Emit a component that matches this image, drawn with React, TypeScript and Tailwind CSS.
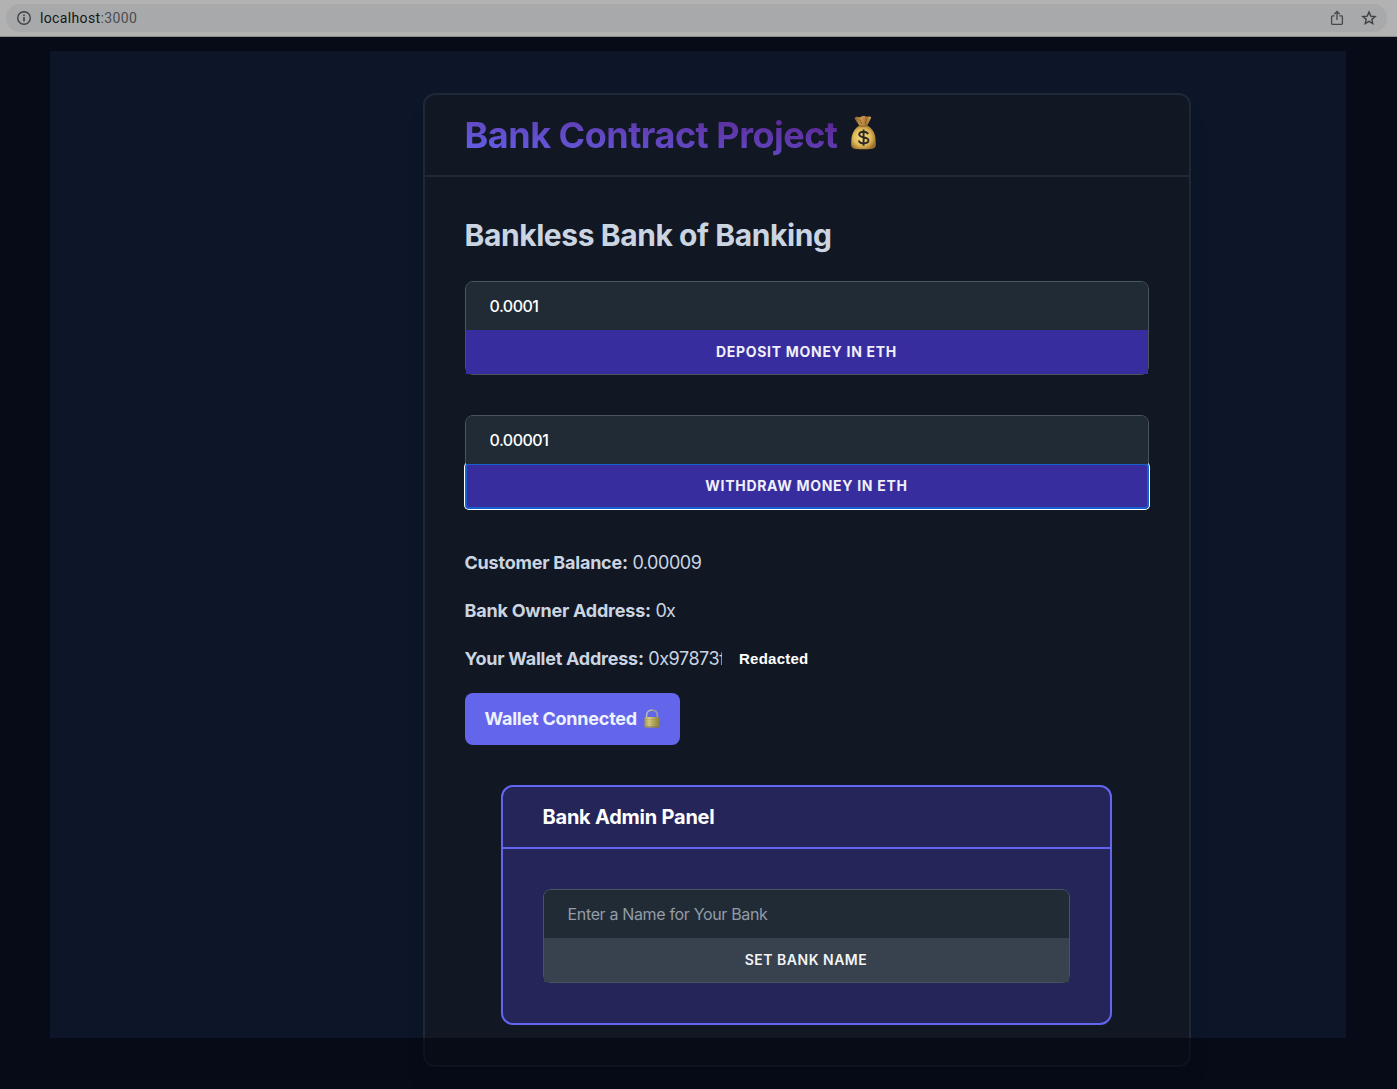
import React from "react";

function InfoIcon() {
  return (
    <svg width="16" height="16" viewBox="0 0 16 16" fill="none" className="shrink-0">
      <circle cx="8" cy="8" r="6.3" stroke="#3f4143" strokeWidth="1.4" />
      <rect x="7.2" y="7.2" width="1.6" height="4.2" fill="#3f4143" />
      <rect x="7.2" y="4.6" width="1.6" height="1.6" fill="#3f4143" />
    </svg>
  );
}

function ShareIcon() {
  return (
    <svg width="14" height="16" viewBox="0 0 14 16" fill="none" stroke="#46484a" strokeWidth="1.3">
      <path d="M4.6 5.9H2.4a.8.8 0 0 0-.8.8v6.9c0 .5.3.8.8.8h9.2c.5 0 .8-.3.8-.8V6.7a.8.8 0 0 0-.8-.8H9.4" />
      <path d="M7 10V2M4.3 4.2 7 1.5l2.7 2.7" />
    </svg>
  );
}

function StarIcon() {
  return (
    <svg width="16" height="16" viewBox="0 0 16 16" fill="none" stroke="#3f4143" strokeWidth="1.4">
      <path d="m8 2.1 1.75 4 4.35.4-3.3 2.85 1 4.25L8 11.35 4.2 13.6l1-4.25L1.9 6.5l4.35-.4z" />
    </svg>
  );
}

function MoneyBag() {
  return (
    <svg width="27" height="35" viewBox="0 0 27 35" className="relative -top-[3px] shrink-0">
      <defs>
        <linearGradient id="neck" x1="0" x2="1" y1="0" y2="0">
          <stop offset="0" stopColor="#8b5f25" />
          <stop offset=".4" stopColor="#c99a51" />
          <stop offset=".7" stopColor="#a87431" />
          <stop offset="1" stopColor="#d0a760" />
        </linearGradient>
        <radialGradient id="bag" cx=".45" cy=".5" r=".58">
          <stop offset="0" stopColor="#f5de87" />
          <stop offset=".6" stopColor="#dfbb58" />
          <stop offset="1" stopColor="#9a6b28" />
        </radialGradient>
      </defs>
      <path d="M5.5 2.2c1.8-.9 3.3.3 4.6 0 1.7-.5 2.9-1.9 4.7-1.2 1.5.5 2.8.9 4.6.5 1.3-.2 2.1.6 1.6 1.5L17 11H9.5L5 4.2c-.5-.8-.4-1.6.5-2z" fill="url(#neck)" />
      <path d="M9.5 10.500h7.700c4.100 2 6.900 5.700 7.900 10.200.7 3 .5 6.100.8 8.200.2 2.800-1.400 4.600-4.600 5-4.900.6-10.700.6-15.700.1-3.200-.4-4.600-2.100-4.500-4.700.2-3 .1-6.200 1-9 1.200-4.300 3.700-8 7.400-9.800z" fill="url(#bag)" />
      <path d="M9.200 10.700c2.600.8 5.600.8 8.100-.1M9.700 4.300l2.300 5M16.700 3.500l-1.600 5.600" stroke="#85591f" strokeWidth=".9" fill="none" />
      <path d="M18.100 19.100c-.7-1.700-2.300-2.400-4.500-2.400-2.700 0-4.400 1.100-4.400 2.900 0 4 9.300 1.700 9.300 5.700 0 1.900-1.900 3.100-4.800 3.100-2.600 0-4.400-.9-4.900-2.900M13.600 14.400v16.300" stroke="#302a27" strokeWidth="1.900" fill="none" />
    </svg>
  );
}

function Lock() {
  return (
    <svg width="16" height="19" viewBox="0 0 16 19" className="relative -top-px shrink-0">
      <defs>
        <linearGradient id="brass" x1="0" x2="1" y1="0" y2="0">
          <stop offset="0" stopColor="#a99a50" />
          <stop offset=".3" stopColor="#d9ce87" />
          <stop offset=".62" stopColor="#b3a65f" />
          <stop offset="1" stopColor="#8e8040" />
        </linearGradient>
      </defs>
      <path d="M2.700 9V6.400C2.700 3 4.800 1.200 8 1.200s5.300 1.800 5.300 5.200V9" fill="none" stroke="#979ca2" strokeWidth="1.700" />
      <path d="M2.500 8.500V6.300C2.500 3 4.700 1 8 1" fill="none" stroke="#c6cbc9" strokeWidth=".8" />
      <rect x=".5" y="8" width="15" height="10.400" rx="1" fill="url(#brass)" />
      <path d="M.7 10.700h14.600M.7 13.200h14.600M.7 15.700h14.600" stroke="#817638" strokeWidth=".4" opacity=".6" />
      <path d="M1 17.900h14" stroke="#77703d" strokeWidth=".8" />
    </svg>
  );
}

function FieldGroup({ value, placeholder, label, variant, focused }: {
  value?: string;
  placeholder?: string;
  label: string;
  variant: "indigo" | "gray";
  focused?: boolean;
}) {
  return (
    <div className="flex h-[94px] flex-col rounded-lg border border-[#4a545f]">
      <input
        type="text"
        defaultValue={value}
        placeholder={placeholder}
        className="relative z-10 h-12 w-full rounded-t-[7px] bg-[#212b36] px-[23.5px] text-base font-medium tracking-[-0.5px] text-white outline-none placeholder:font-normal placeholder:tracking-[-0.34px] placeholder:text-[#939ca8]"
      />
      <button
        className={
          "h-11 w-full pr-px text-sm " +
          (variant === "indigo" ? "bg-[#382d9e] font-bold tracking-[0.7px] text-[#f0f0fa] " : "bg-[#38414e] font-semibold tracking-[0.5px] text-[#f3f4f6] ") +
          (focused ? "rounded-[3px] shadow-[inset_0_0_0_1px_#1460cf,0_0_0_1px_#1460cf,0_0_0_2px_#ffffff]" : "")
        }
      >
        {label}
      </button>
    </div>
  );
}

export default function App() {
  return (
    <div className="relative flex h-[1089px] w-[1397px] flex-col overflow-hidden bg-[#0d1628] font-['Inter',sans-serif]">
      <header className="relative z-20 flex h-[37px] shrink-0 items-start border-b border-[#8d8d8d] bg-[#b2b2b2] px-1.5 pt-1">
        <div className="flex h-7 w-[1381px] items-center rounded-full bg-[#a8a9aa] pl-2.5 pr-2.5">
          <InfoIcon />
          <span className="ml-2 flex-1 font-[Roboto] text-sm tracking-[0.36px] text-[#151618]">
            localhost<span className="text-[#4b4d50]">:3000</span>
          </span>
          <div className="flex items-center gap-[17px]">
            <ShareIcon />
            <StarIcon />
          </div>
        </div>
      </header>

      <main className="ml-[423px] mt-14 flex h-[974px] w-[768px] flex-col rounded-xl border-2 border-[#1e2837] bg-[#111824] shadow-xl">
        <div className="flex h-[82px] items-center border-b-2 border-[#1e2837] px-[39.5px]">
          <h1 className="flex items-center gap-[12.5px] whitespace-nowrap text-4xl font-bold tracking-[-0.5px]">
            <span className="bg-gradient-to-tr from-[#6366f1] to-[#581c87] bg-clip-text leading-[48px] text-transparent">
              Bank Contract Project
            </span>
            <MoneyBag />
          </h1>
        </div>

        <section className="flex flex-col px-10 pt-10 text-[#cbd5e1]">
          <h2 className="-ml-[0.5px] h-9 whitespace-nowrap text-3xl font-bold tracking-[-0.42px]">Bankless Bank of Banking</h2>
          <div className="mt-7 flex flex-col gap-10">
            <FieldGroup value="0.0001" label="DEPOSIT MONEY IN ETH" variant="indigo" />
            <FieldGroup value="0.00001" label="WITHDRAW MONEY IN ETH" variant="indigo" focused />
          </div>
          <div className="-ml-[0.5px] mt-10 flex flex-col gap-5 whitespace-nowrap text-lg tracking-[-0.45px]">
            <p><b className="tracking-[-0.22px]">Customer Balance:</b> 0.00009</p>
            <p><b className="tracking-[-0.22px]">Bank Owner Address:</b> <span className="tracking-[-0.8px]">0x</span></p>
            <p className="flex h-7">
              <span className="w-[257.5px] overflow-hidden"><b className="tracking-[-0.24px]">Your Wallet Address:</b> 0x97873f</span>
              <span className="ml-[17px] pt-0.5 font-['Liberation_Sans'] text-[15px] font-bold tracking-[0.25px] text-white">Redacted</span>
            </p>
          </div>
          <button className="mt-5 flex h-[52px] w-[215px] items-center gap-[7.5px] whitespace-nowrap rounded-lg bg-[#6366eb] pl-[19.5px] text-lg font-bold tracking-[-0.22px] text-[#eef2ff]">
            Wallet Connected <Lock />
          </button>
        </section>

        <section className="mx-[76px] mt-10 flex h-60 w-[611px] flex-col rounded-xl border-2 border-[#6366f1] bg-[#26255a]">
          <div className="flex h-[62px] items-center border-b-2 border-[#6366f1] px-[39.5px]">
            <h3 className="text-xl font-bold tracking-[-0.23px] text-white">Bank Admin Panel</h3>
          </div>
          <div className="p-10">
            <FieldGroup placeholder="Enter a Name for Your Bank" label="SET BANK NAME" variant="gray" />
          </div>
        </section>
      </main>

      <div className="pointer-events-none absolute left-[50px] top-[51px] z-10 h-[987px] w-[1296px] shadow-[0_0_0_100px_rgba(1,4,12,0.58)]" />
    </div>
  );
}
